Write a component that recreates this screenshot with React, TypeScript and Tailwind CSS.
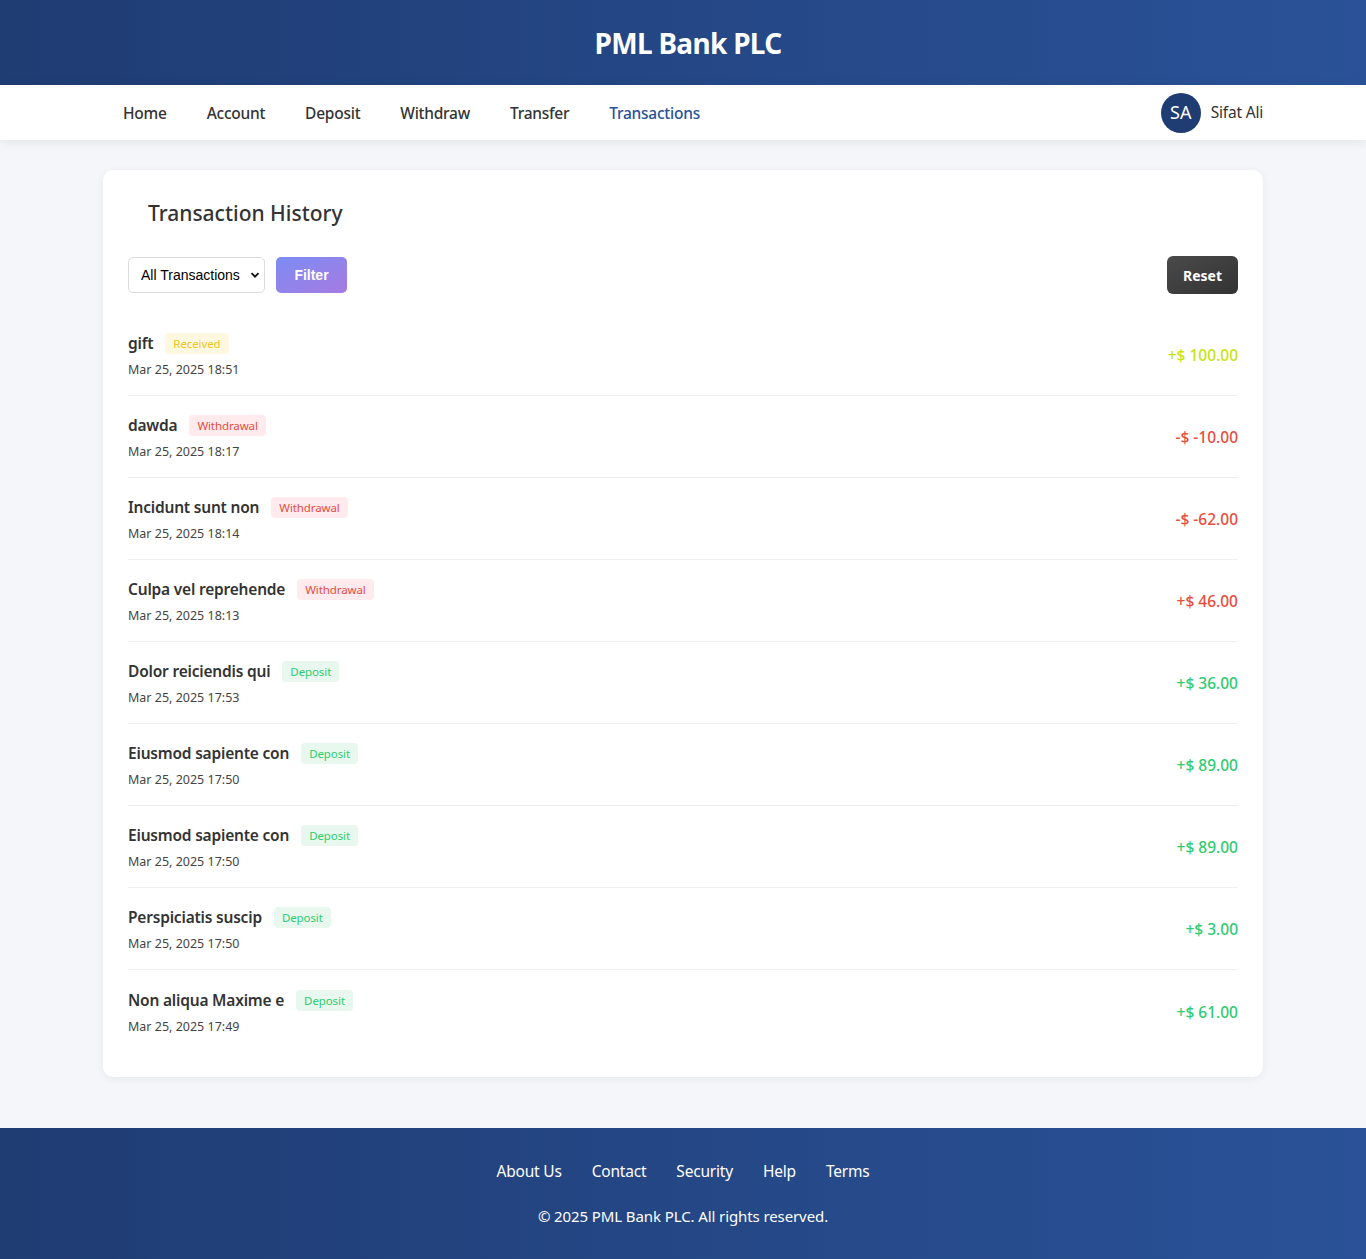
import React from 'react';

type Kind = 'received' | 'withdrawal' | 'deposit';

interface Tx {
    title: string;
    kind: Kind;
    date: string;
    amount: string;
    amountColor: string;
}

const TXS: Tx[] = [
    { title: 'gift', kind: 'received', date: 'Mar 25, 2025 18:51', amount: '+$ 100.00', amountColor: 'text-[#c6e314]' },
    { title: 'dawda', kind: 'withdrawal', date: 'Mar 25, 2025 18:17', amount: '-$ -10.00', amountColor: 'text-[#e74c3c]' },
    { title: 'Incidunt sunt non', kind: 'withdrawal', date: 'Mar 25, 2025 18:14', amount: '-$ -62.00', amountColor: 'text-[#e74c3c]' },
    { title: 'Culpa vel reprehende', kind: 'withdrawal', date: 'Mar 25, 2025 18:13', amount: '+$ 46.00', amountColor: 'text-[#e74c3c]' },
    { title: 'Dolor reiciendis qui', kind: 'deposit', date: 'Mar 25, 2025 17:53', amount: '+$ 36.00', amountColor: 'text-[#2ecc71]' },
    { title: 'Eiusmod sapiente con', kind: 'deposit', date: 'Mar 25, 2025 17:50', amount: '+$ 89.00', amountColor: 'text-[#2ecc71]' },
    { title: 'Eiusmod sapiente con', kind: 'deposit', date: 'Mar 25, 2025 17:50', amount: '+$ 89.00', amountColor: 'text-[#2ecc71]' },
    { title: 'Perspiciatis suscip', kind: 'deposit', date: 'Mar 25, 2025 17:50', amount: '+$ 3.00', amountColor: 'text-[#2ecc71]' },
    { title: 'Non aliqua Maxime e', kind: 'deposit', date: 'Mar 25, 2025 17:49', amount: '+$ 61.00', amountColor: 'text-[#2ecc71]' },
];

const BADGE: Record<Kind, { label: string; cls: string }> = {
    received: { label: 'Received', cls: 'bg-[#fff8e1] text-[#f5c518]' },
    withdrawal: { label: 'Withdrawal', cls: 'bg-[#ffebee] text-[#e74c3c]' },
    deposit: { label: 'Deposit', cls: 'bg-[#e8f8ee] text-[#2ecc71]' },
};

const NAV = ['Home', 'Account', 'Deposit', 'Withdraw', 'Transfer', 'Transactions'];
const FOOTER_LINKS = ['About Us', 'Contact', 'Security', 'Help', 'Terms'];

export default function App() {
    return (
        <div className="min-h-screen flex flex-col bg-[#f5f6fa] text-[#333] font-['Noto_Sans',sans-serif]">
            {/* Header */}
            <header className="h-[85px] flex items-center justify-center pl-[10px] bg-gradient-to-r from-[#1f3c73] to-[#2a5298]">
                <h1 className="text-[28px] font-bold text-white tracking-tight">PML Bank PLC</h1>
            </header>

            {/* Nav */}
            <nav className="bg-white h-[55px] shadow-[0_2px_10px_rgba(0,0,0,0.08)] relative z-10">
                <div className="w-[1160px] mx-auto h-full pt-[2px] flex items-center justify-between">
                    <ul className="flex items-center">
                        {NAV.map((item) => (
                            <li key={item}>
                                <a
                                    className={`px-5 text-[15.5px] tracking-[-0.25px] font-medium ${item === 'Transactions' ? 'text-[#2a5298]' : 'text-[#333]'}`}
                                >
                                    {item}
                                </a>
                            </li>
                        ))}
                    </ul>
                    <div className="flex items-center gap-[10px] -mt-[2px]">
                        <div className="w-10 h-10 rounded-full bg-[#1f3c73] text-white flex items-center justify-center text-[18px]">
                            SA
                        </div>
                        <span className="text-[15.5px] tracking-[-0.2px] text-[#333]">Sifat Ali</span>
                    </div>
                </div>
            </nav>

            {/* Main */}
            <main className="flex-1 pt-[30px] pb-[50px]">
                <div className="w-[1160px] mx-auto bg-white rounded-[10px] shadow-[0_2px_10px_rgba(0,0,0,0.06)] p-[25px]">
                    <h2 className="ml-5 text-[21px] font-medium text-[#333] leading-[36px]">Transaction History</h2>

                    <div className="mt-[25px] flex items-center justify-between">
                        <div className="flex items-center gap-[11px]">
                            <div className="relative">
                                <select className="appearance-none h-9 w-[137px] pl-3 pr-4 border border-[#ddd] rounded-[5px] bg-white text-[14px] text-black font-['Liberation_Sans',Arial,sans-serif]">
                                    <option>All Transactions</option>
                                </select>
                                <svg className="absolute right-[5px] top-1/2 -translate-y-1/2 pointer-events-none" width="10" height="10" viewBox="0 0 10 10">
                                    <path d="M1.5 3.2 L5 6.7 L8.5 3.2" stroke="#111" strokeWidth="1.8" fill="none" />
                                </svg>
                            </div>
                            <button className="h-9 w-[71px] rounded-[5px] bg-gradient-to-br from-[#7a8cf5] to-[#a57ae0] text-white text-[14px] font-bold font-['Liberation_Sans',Arial,sans-serif]">
                                Filter
                            </button>
                        </div>
                        <button className="h-[38px] w-[71px] rounded-[6px] bg-gradient-to-br from-[#4a4a4a] to-[#333] text-white text-[14px] font-bold">
                            Reset
                        </button>
                    </div>

                    <ul className="mt-5">
                        {TXS.map((tx, i) => {
                            const badge = BADGE[tx.kind];
                            return (
                                <li
                                    key={i}
                                    className={`h-[82px] pt-[3px] flex items-center justify-between ${i < TXS.length - 1 ? 'border-b border-[#eee]' : ''}`}
                                >
                                    <div>
                                        <div className="flex items-center gap-3">
                                            <span className="text-[15.5px] tracking-[-0.2px] font-semibold text-[#333]">{tx.title}</span>
                                            <span className={`px-2 py-[2px] rounded-[4px] text-[11.5px] tracking-[-0.1px] ${badge.cls}`}>{badge.label}</span>
                                        </div>
                                        <div className="mt-[6px] text-[12.5px] text-[#444]">{tx.date}</div>
                                    </div>
                                    <div className={`text-[15.5px] font-medium ${tx.amountColor}`}>{tx.amount}</div>
                                </li>
                            );
                        })}
                    </ul>
                </div>
            </main>

            {/* Footer */}
            <footer className="h-[131px] bg-gradient-to-r from-[#1f3c73] to-[#2a5298] text-white flex flex-col items-center justify-center">
                <div className="flex items-center gap-[30px] text-[15.5px] tracking-[-0.2px]">
                    {FOOTER_LINKS.map((l) => (
                        <a key={l}>{l}</a>
                    ))}
                </div>
                <p className="mt-[22px] text-[15px] tracking-[-0.1px]">© 2025 PML Bank PLC. All rights reserved.</p>
            </footer>
        </div>
    );
}
